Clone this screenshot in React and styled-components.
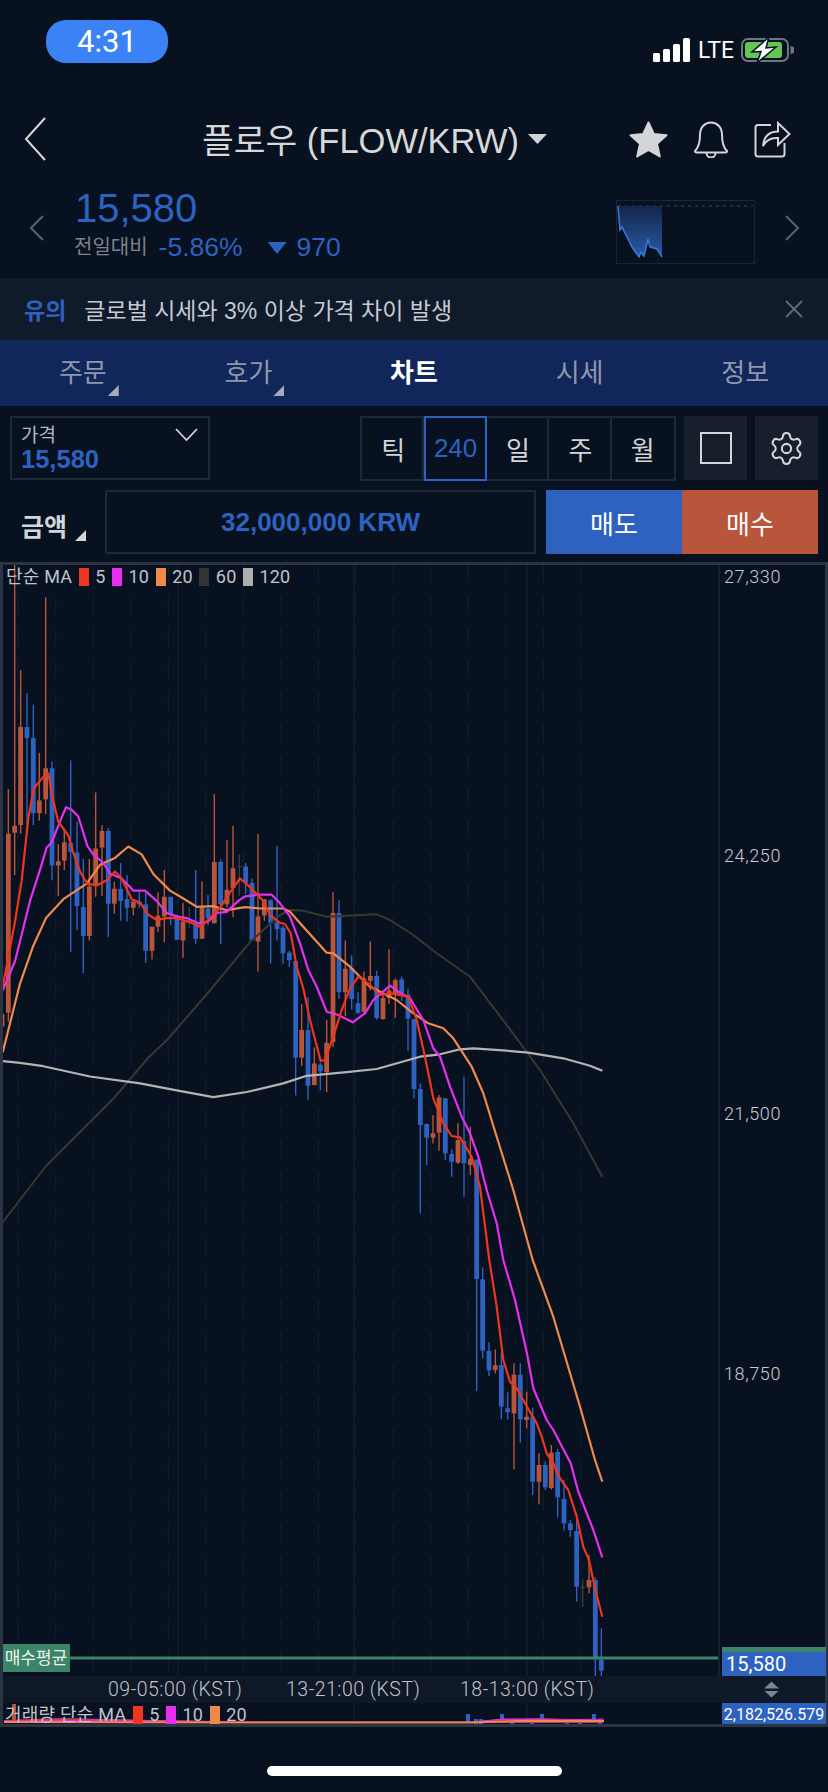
import React from "react";
import styled, { createGlobalStyle } from "styled-components";
import { Settings } from "lucide-react";

const BLUE = "#2d62c0";
const RED = "#b8553a";
const BG = "#07111f";

// candles as read off the chart: x, wick top, wick bottom, body top, body bottom, colour
const from3 = (c) => [c[0] / 3, 560 + c[1] / 2.904, 560 + c[2] / 2.904, 560 + c[3] / 2.904, 560 + c[4] / 2.904, c[5]];
const from4 = (c) => [280 + c[0] / 3, 860 + c[1] / 3, 860 + c[2] / 3, 860 + c[3] / 3, 860 + c[4] / 3, c[5]];
const from5 = (c) => [440 + c[0] / 3, 1260 + c[1] / 3, 1260 + c[2] / 3, 1260 + c[3] / 3, 1260 + c[4] / 3, c[5]];

const candles = [
  ...[
    [6, 1300, 1470, 1318, 1355, "r"], [25, 665, 1340, 795, 1315, "r"], [44, -10, 915, 772, 792, "r"],
    [62, 320, 795, 485, 770, "r"], [81, 387, 770, 485, 517, "b"], [100, 420, 770, 517, 735, "b"],
    [118, 560, 757, 698, 735, "r"], [137, 108, 738, 605, 695, "r"], [156, 585, 930, 605, 887, "b"],
    [175, 825, 975, 875, 887, "r"], [193, 780, 900, 820, 873, "r"], [212, 582, 1138, 822, 848, "b"],
    [231, 760, 1075, 850, 1005, "b"], [250, 868, 1200, 1008, 1092, "b"], [268, 868, 1105, 948, 1092, "r"],
    [287, 675, 978, 838, 945, "r"], [306, 770, 975, 787, 835, "r"], [325, 778, 1095, 787, 998, "b"],
    [343, 935, 1027, 955, 998, "r"], [362, 880, 1048, 955, 990, "b"], [381, 915, 1050, 985, 1010, "b"],
    [400, 985, 1032, 992, 1010, "r"], [418, 965, 1010, 992, 1000, "b"], [437, 965, 1170, 1000, 1135, "b"],
    [456, 1065, 1160, 1065, 1135, "r"], [474, 965, 1080, 1033, 1065, "r"], [493, 900, 1110, 978, 1035, "r"],
    [512, 978, 1060, 978, 1028, "b"], [531, 1030, 1103, 1035, 1103, "b"], [549, 995, 1155, 1050, 1105, "r"],
    [568, 1008, 1070, 1049, 1052, "g"], [587, 900, 1115, 1055, 1100, "b"], [606, 933, 1100, 1010, 1100, "r"],
    [624, 973, 1060, 1012, 1040, "b"], [643, 680, 1055, 877, 1055, "r"], [662, 870, 1115, 877, 1000, "b"],
    [681, 813, 1010, 958, 1000, "r"], [699, 772, 1037, 895, 952, "r"], [718, 855, 975, 889, 892, "g"],
    [737, 880, 970, 890, 938, "b"], [756, 925, 1105, 938, 1105, "b"], [774, 795, 1195, 1035, 1108, "r"],
    [793, 985, 1048, 985, 1032, "r"], [812, 985, 1172, 988, 1055, "b"], [831, 830, 1105, 1052, 1072, "b"],
    [849, 1062, 1172, 1068, 1142, "b"], [868, 1135, 1182, 1140, 1162, "b"], [887, 1165, 1555, 1165, 1445, "b"],
    [905, 1290, 1470, 1365, 1445, "r"], [924, 1270, 1568, 1365, 1527, "b"], [943, 1415, 1520, 1462, 1525, "r"],
    [961, 1460, 1540, 1465, 1485, "b"], [980, 1335, 1545, 1402, 1487, "r"], [999, 965, 1415, 1025, 1400, "r"],
    [1017, 988, 1275, 1025, 1255, "b"], [1036, 1105, 1325, 1187, 1255, "r"], [1055, 1148, 1305, 1185, 1275, "b"],
    [1074, 1255, 1318, 1287, 1315, "b"], [1092, 1195, 1315, 1215, 1312, "r"], [1111, 1108, 1250, 1208, 1222, "r"],
    [1130, 1193, 1335, 1208, 1330, "b"], [1149, 1250, 1335, 1272, 1333, "r"], [1167, 1130, 1290, 1250, 1272, "r"],
    [1186, 1215, 1330, 1220, 1260, "r"], [1205, 1210, 1280, 1218, 1262, "b"], [1224, 1245, 1425, 1262, 1332, "b"],
  ].map(from3),
  ...[
    [402, 477, 715, 477, 687, "b"], [421, 670, 1060, 687, 795, "b"], [440, 790, 915, 792, 833, "b"],
    [459, 765, 850, 820, 833, "r"], [477, 705, 872, 712, 818, "r"], [496, 715, 900, 715, 880, "b"],
    [515, 868, 950, 882, 905, "b"], [534, 790, 912, 840, 908, "r"], [552, 650, 1010, 843, 910, "b"],
    [571, 800, 945, 897, 915, "r"],
  ].map(from4),
  ...[
    [110, -301, 393, -301, 57, "b"], [128, 22, 295, 58, 272, "b"], [147, 247, 348, 273, 331, "b"],
    [166, 268, 340, 316, 330, "r"], [184, 277, 478, 315, 440, "b"], [203, 397, 478, 445, 456, "b"],
    [222, 310, 628, 344, 460, "r"], [241, 310, 548, 344, 478, "b"], [260, 395, 505, 470, 480, "r"],
    [278, 443, 705, 470, 665, "b"], [297, 580, 733, 615, 665, "r"], [316, 605, 690, 615, 682, "b"],
    [334, 555, 688, 578, 684, "r"], [353, 567, 772, 576, 712, "b"], [372, 660, 812, 717, 790, "b"],
    [391, 780, 830, 790, 810, "b"], [410, 760, 1025, 813, 980, "b"], [428, 958, 1040, 980, 984, "g"],
    [447, 885, 1000, 960, 982, "r"], [466, 952, 1250, 960, 1195, "b"], [484, 1105, 1250, 1200, 1232, "b"],
  ].map(from5),
];

const line3 = (pts) => pts.map(([x, y]) => [x / 3, 560 + y / 2.904]);
const line4 = (pts) => pts.map(([x, y]) => [280 + x / 3, 860 + y / 3]);
const line5 = (pts) => pts.map(([x, y]) => [440 + x / 3, 1260 + y / 3]);
const toPoints = (pts) => pts.map(([x, y]) => `${x.toFixed(1)},${y.toFixed(1)}`).join(" ");

const ma5 = [
  ...line3([[8, 1240], [45, 1050], [65, 930], [85, 750], [100, 670], [108, 655], [130, 630], [145, 620], [160, 700], [175, 760], [205, 800], [220, 850], [240, 905], [262, 940], [290, 945], [320, 930], [345, 905], [365, 925], [395, 985], [420, 995], [445, 1030], [470, 1045], [500, 1040], [530, 1040], [565, 1050], [600, 1065], [625, 1045], [660, 1010], [690, 965], [720, 925], [750, 950], [790, 990], [810, 1030], [835, 1050]]),
  ...line4([[0, 188], [15, 192], [32, 220], [50, 320], [70, 385], [90, 480], [122, 603], [135, 600], [160, 530], [185, 450], [210, 385], [235, 350], [270, 375], [300, 405], [335, 400], [385, 410], [410, 480], [435, 590], [460, 715], [490, 790], [515, 828], [540, 832], [575, 890], [600, 980]]),
  ...line5([[148, 0], [170, 140], [190, 300], [210, 365], [230, 385], [255, 430], [290, 490], [305, 530], [320, 580], [340, 610], [360, 655], [385, 690], [410, 770], [430, 860], [447, 900], [465, 985], [487, 1070]]),
];
const ma10 = [
  ...line3([[8, 1250], [45, 1165], [90, 990], [120, 900], [140, 835], [155, 820], [180, 760], [198, 718], [215, 725], [235, 745], [262, 830], [280, 855], [310, 880], [330, 910], [365, 925], [400, 960], [435, 960], [470, 990], [500, 1025], [530, 1035], [560, 1040], [595, 1055], [625, 1050], [650, 1025], [680, 1022], [715, 990], [735, 977], [780, 972], [815, 972]]),
  ...line4([[0, 130], [30, 170], [60, 250], [85, 330], [110, 380], [140, 455], [175, 465], [218, 487], [255, 460], [280, 420], [330, 377], [355, 395], [390, 415], [430, 480], [460, 565], [480, 590], [510, 680], [545, 770], [570, 820], [595, 890], [620, 990], [650, 1090]]),
  ...line5([[190, 0], [225, 120], [262, 285], [280, 385], [320, 480], [340, 510], [392, 610], [415, 695], [460, 810], [487, 892]]),
];
const ma20 = [
  ...line3([[8, 1430], [60, 1230], [100, 1120], [138, 1040], [190, 985], [260, 940], [300, 885], [345, 865], [385, 832], [425, 855], [460, 912], [510, 960], [545, 980], [590, 1007], [640, 1005], [680, 1017], [735, 1008], [780, 1012], [850, 1012]]),
  ...line4([[30, 155], [65, 195], [140, 278], [160, 280], [210, 320], [270, 380], [350, 420], [400, 460], [445, 490], [490, 505], [520, 535], [575, 620], [610, 700], [650, 830], [700, 990]]),
  ...line5([[278, 0], [340, 170], [420, 440], [465, 600], [487, 665]]),
];
const ma60 = [
  [3, 1222], [46, 1166], [114, 1098], [148, 1058], [167, 1040], [207, 994], [250, 942],
  ...line4([[0, 165], [30, 150], [70, 152], [140, 170], [290, 163], [330, 180], [400, 225], [470, 280], [570, 350], [680, 495], [780, 630], [880, 790], [967, 950]]),
];
const ma120 = [
  ...line3([[8, 1455], [60, 1460], [130, 1470], [270, 1500], [420, 1520], [530, 1540], [640, 1560], [740, 1545], [850, 1520], [920, 1498], [1040, 1487], [1130, 1478]]),
  ...line4([[420, 590], [480, 583], [540, 568], [580, 565], [680, 572], [745, 578], [850, 595], [930, 617], [967, 632]]),
];

const dashX = Array.from({ length: 16 }, (_, i) => 18.3 + i * 37.5);
const candleColor = { r: RED, b: BLUE, g: "#3a3d40" };

const GlobalStyle = createGlobalStyle`
  html, body {
    margin: 0;
    padding: 0;
    background: ${BG};
  }
  * {
    box-sizing: border-box;
  }
`;

const Page = styled.div`
  width: 828px;
  height: 1792px;
  display: flex;
  flex-direction: column;
  background: ${BG};
  color: #d3d5d8;
  font-family: "Liberation Sans", "Noto Sans CJK KR", sans-serif;
  overflow: hidden;
`;

const StatusBar = styled.div`
  height: 100px;
  display: flex;
  justify-content: space-between;
  padding: 20px 34px 0 46px;
`;

const TimePill = styled.div`
  width: 122px;
  height: 43px;
  border-radius: 20px;
  background: #3b82f6;
  color: #fff;
  font-family: Roboto, sans-serif;
  font-size: 31px;
  line-height: 43px;
  text-align: center;
`;

const StatusIcons = styled.div`
  display: flex;
  align-items: center;
  gap: 7px;
  height: 26px;
  margin-top: 17px;
`;

const Lte = styled.span`
  font-family: Roboto, sans-serif;
  font-size: 23px;
  color: #fff;
`;

const NavBar = styled.div`
  height: 78px;
  display: flex;
  align-items: center;
  padding: 0 37px 0 24px;
`;

const Title = styled.div`
  flex: 1;
  display: flex;
  align-items: center;
  justify-content: center;
  gap: 9px;
  font-size: 34.5px;
  color: #d8d8d8;
  padding-left: 74px;
  margin-top: -2px;
`;

const TitleCaret = styled.span`
  width: 19px;
  height: 10px;
  margin-top: 2px;
  background: #d0d2d4;
  clip-path: polygon(0 0, 100% 0, 50% 100%);
`;

const NavIcons = styled.div`
  display: flex;
  align-items: center;
  gap: 25px;
`;

const PriceRow = styled.div`
  height: 100px;
  display: flex;
  align-items: center;
  padding: 0 29px 0 30px;
`;

const PriceInfo = styled.div`
  flex: 1;
  padding-left: 31px;
  margin-top: -8px;
`;

const PriceValue = styled.div`
  font-size: 40px;
  line-height: 46px;
  color: ${BLUE};
`;

const ChangeRow = styled.div`
  display: flex;
  align-items: center;
  font-size: 26.5px;
  line-height: 32px;
  color: ${BLUE};
`;

const ChangeLabel = styled.span`
  color: #7d838d;
  font-size: 20px;
  margin-left: -1px;
  margin-right: 11px;
`;

const DownMark = styled.span`
  width: 19px;
  height: 12px;
  margin: 2px 10px 0 25px;
  background: ${BLUE};
  clip-path: polygon(0 0, 100% 0, 50% 100%);
`;

const MiniChart = styled.svg`
  width: 139px;
  height: 64px;
  margin-right: 30px;
  margin-top: 8px;
`;

const Notice = styled.div`
  height: 62px;
  display: flex;
  align-items: center;
  padding: 0 25px 0 24px;
  background: #0f1a2b;
  font-size: 23px;
  color: #c6cad0;
`;

const NoticeTag = styled.b`
  color: ${BLUE};
  margin-right: 18px;
`;

const NoticeText = styled.span`
  flex: 1;
`;

const Tabs = styled.div`
  height: 66px;
  display: flex;
  background: #11275c;
`;

const Tab = styled.div`
  flex: 1;
  text-align: center;
  font-size: 26px;
  line-height: 66px;
  font-weight: ${(p) => (p.$active ? 700 : 400)};
  color: ${(p) => (p.$active ? "#fff" : "#8f98ab")};
`;

const TabLabel = styled.span`
  position: relative;
  display: inline-block;
`;

const CornerMark = styled.span`
  position: absolute;
  right: ${(p) => p.$right || "-12px"};
  bottom: ${(p) => p.$bottom || "10px"};
  width: 11px;
  height: 11px;
  background: ${(p) => p.$color || "#a3aab8"};
  clip-path: polygon(100% 0, 100% 100%, 0 100%);
`;

const Controls = styled.div`
  display: flex;
  padding: 10px 10px 0;
`;

const PriceSelect = styled.div`
  position: relative;
  width: 200px;
  height: 64px;
  padding: 6px 9px;
  border: 2px solid #1e2838;
`;

const SelectLabel = styled.div`
  font-size: 19px;
  line-height: 23px;
  color: #b4b8be;
`;

const SelectValue = styled.div`
  font-size: 25.5px;
  line-height: 24px;
  font-weight: 700;
  color: ${BLUE};
`;

const SelectArrow = styled.svg`
  position: absolute;
  right: 10px;
  top: 10px;
`;

const Segments = styled.div`
  display: flex;
  width: 316px;
  margin-left: auto;
  height: 65px;
  border: 2px solid #1e2838;
`;

const Segment = styled.div`
  flex: 1;
  margin: -2px 0;
  display: flex;
  align-items: center;
  justify-content: center;
  font-size: 26px;
  color: ${(p) => (p.$active ? BLUE : "#d3d5d8")};
  border: 2px solid ${(p) => (p.$active ? BLUE : "transparent")};
  border-right-color: ${(p) => (p.$active ? BLUE : "#1e2838")};
  &:last-child {
    border-right-color: transparent;
  }
`;

const IconButton = styled.div`
  width: 63px;
  height: 64px;
  margin-left: 8px;
  display: flex;
  align-items: center;
  justify-content: center;
  background: #171f2d;
`;

const SquareMark = styled.span`
  width: 32px;
  height: 32px;
  border: 2px solid #d3d5d8;
`;

const OrderRow = styled.div`
  display: flex;
  height: 64px;
  margin-top: 9px;
  padding: 0 10px 0 21px;
`;

const AmountLabel = styled.div`
  width: 84px;
  display: flex;
  align-items: center;
  font-size: 25px;
  font-weight: 700;
  padding-top: 6px;
`;

const AmountBox = styled.div`
  width: 431px;
  margin-right: 10px;
  display: flex;
  align-items: center;
  justify-content: center;
  border: 2px solid #1e2838;
  font-size: 26px;
  font-weight: 700;
  color: ${BLUE};
`;

const TradeButton = styled.div`
  flex: 1;
  display: flex;
  align-items: center;
  justify-content: center;
  font-size: 26px;
  color: #fff;
  background: ${(p) => p.$bg};
`;

const ChartPanel = styled.div`
  margin-top: 8px;
  flex: 0 0 1165px;
  display: flex;
  flex-direction: column;
  border: 3px solid #2b3442;
  background: #081120;
  font-family: Roboto, "Noto Sans CJK KR", sans-serif;
`;

const ChartRow = styled.div`
  display: flex;
  flex: ${(p) => p.$flex || "none"};
  height: ${(p) => p.$height || "auto"};
  background: ${(p) => p.$bg || "transparent"};
`;

const Plot = styled.div`
  position: relative;
  width: 715px;
  height: 100%;
  overflow: hidden;
`;

const PlotSvg = styled.svg`
  display: block;
`;

const Legend = styled.div`
  position: absolute;
  left: ${(p) => p.$left || "3px"};
  top: ${(p) => p.$top || "1px"};
  display: flex;
  align-items: center;
  font-size: 18px;
  line-height: 22px;
  letter-spacing: 0.2px;
  color: #c0c4ca;
`;

const Swatch = styled.span`
  width: 10px;
  height: 18px;
  margin: 0 6.5px;
  background: ${(p) => p.$color};
`;

const AvgLabel = styled.div`
  position: absolute;
  left: -1px;
  bottom: 4px;
  width: 68px;
  height: 28px;
  background: #3b8468;
  color: #eef3f0;
  font-size: 17px;
  line-height: 28px;
  text-align: center;
  white-space: nowrap;
`;

const Axis = styled.div`
  position: relative;
  flex: 1;
  display: flex;
  flex-direction: column;
  justify-content: flex-end;
  border-left: ${(p) => (p.$line ? "2px solid #172131" : "none")};
`;

const AxisLabel = styled.div`
  position: absolute;
  left: 4px;
  top: ${(p) => p.$top}px;
  font-size: 18px;
  font-weight: 300;
  line-height: 22px;
  letter-spacing: 0.6px;
  color: #c8ccd2;
`;

const PriceTag = styled.div`
  margin-left: 2px;
  margin-right: -1px;
  height: 29px;
  border-top: 5px solid #3b8468;
  background: ${BLUE};
  color: #fff;
  font-size: 20px;
  line-height: 24px;
  padding-left: 4px;
`;

const TimeLabels = styled.div`
  width: 715px;
  display: flex;
  align-items: center;
  padding-left: 105px;
  font-size: 19.5px;
  font-weight: 300;
  letter-spacing: 0.5px;
  color: #c0c4ca;
`;

const TimeLabel = styled.span`
  width: ${(p) => p.$width}px;
  white-space: nowrap;
`;

const ArrowPair = styled.div`
  width: 100%;
  height: 100%;
  display: flex;
  flex-direction: column;
  align-items: center;
  justify-content: center;
  gap: 2px;
`;

const Arrow = styled.span`
  width: 15px;
  height: 7px;
  background: #7c8594;
  clip-path: ${(p) => (p.$up ? "polygon(50% 0, 100% 100%, 0 100%)" : "polygon(0 0, 100% 0, 50% 100%)")};
`;

const VolumeValue = styled.div`
  margin-left: 4px;
  margin-right: -1px;
  height: 100%;
  background: ${BLUE};
  color: #fff;
  font-size: 16px;
  line-height: 23px;
  text-align: center;
  white-space: nowrap;
`;

const HomeArea = styled.div`
  flex: 1;
  display: flex;
  justify-content: center;
  padding-top: 39px;
`;

const HomeBar = styled.div`
  width: 295px;
  height: 10px;
  border-radius: 5px;
  background: #fff;
`;

const SignalIcon = () => (
  <svg width="38" height="24" viewBox="0 0 38 24">
    <rect x="0" y="15" width="7" height="9" rx="1.5" fill="#fff" />
    <rect x="10" y="11" width="7" height="13" rx="1.5" fill="#fff" />
    <rect x="20" y="6" width="7" height="18" rx="1.5" fill="#fff" />
    <rect x="30" y="0" width="7" height="24" rx="1.5" fill="#fff" />
  </svg>
);

const BatteryIcon = () => (
  <svg width="53" height="26" viewBox="0 0 53 26">
    <rect x="1" y="2" width="46" height="22" rx="6" fill="none" stroke="#6f767d" strokeWidth="2" />
    <rect x="4" y="5" width="37" height="16" rx="3" fill="#62c554" />
    <path d="M49.5 9 a4 4 0 0 1 0 8 z" fill="#6f767d" />
    <path d="M28 0 L11 15 L20 14.5 L16 26 L35 10 L25 11 Z" fill="#fff" stroke={BG} strokeWidth="1.5" />
  </svg>
);

const BackIcon = ({ size }) => (
  <svg width={size} height={size * 2} viewBox="0 0 22 44" fill="none">
    <path d="M21 1 L2 22 L21 43" stroke="#d8d8d8" strokeWidth="2" />
  </svg>
);

const PagerIcon = ({ flip }) => (
  <svg width="14" height="26" viewBox="0 0 14 26" fill="none">
    <path d={flip ? "M1 1 L13 13 L1 25" : "M13 1 L1 13 L13 25"} stroke="#5a6270" strokeWidth="2" />
  </svg>
);

const StarIcon = () => (
  <svg width="39" height="37" viewBox="0 0 39 37">
    <path
      d="M19.5 1.5 L24.8 13 L37.5 14.3 L28 22.8 L30.8 35.5 L19.5 29 L8.2 35.5 L11 22.8 L1.5 14.3 L14.2 13 Z"
      fill="#d3d5d8"
      stroke="#d3d5d8"
      strokeWidth="2"
      strokeLinejoin="round"
    />
  </svg>
);

const BellIcon = () => (
  <svg width="36" height="37" viewBox="0 0 36 37" fill="none" stroke="#d3d5d8" strokeWidth="2">
    <path d="M2 30 C6 26 7 22 7 14 C7 6 12 1.5 18 1.5 C24 1.5 29 6 29 14 C29 22 30 26 34 30 C34 31.5 33 31.5 32 31.5 L4 31.5 C3 31.5 2 31.5 2 30 Z" />
    <path d="M13.5 32 C13.5 38 22.5 38 22.5 32" />
  </svg>
);

const ShareIcon = () => (
  <svg width="37" height="37" viewBox="0 0 37 37" fill="none" stroke="#d3d5d8" strokeWidth="2">
    <path d="M17 4 L4 4 Q1.5 4 1.5 6.5 L1.5 33 Q1.5 35.5 4 35.5 L28 35.5 Q30.5 35.5 30.5 33 L30.5 22" />
    <path d="M9 25 C10 15 16 10.5 24 10.5 L24 2 L35.5 13 L24 24 L24 17 C18 16.5 12 19 9 25 Z" />
  </svg>
);

const MiniSpark = () => {
  const pts = [[2, 6], [4, 30], [6, 27], [11, 37], [16, 47], [23, 57], [25, 52], [28, 56], [32, 39], [34, 47], [41, 49], [46, 57]];
  return (
    <MiniChart viewBox="0 0 139 64">
      <defs>
        <linearGradient id="miniFill" x1="0" y1="0" x2="0" y2="1">
          <stop offset="0" stopColor="#12264a" />
          <stop offset="1" stopColor="#2a5aa8" />
        </linearGradient>
      </defs>
      <rect x="0.5" y="0.5" width="138" height="63" fill="none" stroke="#1a2434" />
      <line x1="2" y1="6" x2="137" y2="6" stroke="#2a3342" strokeWidth="1.5" strokeDasharray="3 4" />
      <polygon points={`2,6 ${toPoints(pts)} 46,6`} fill="url(#miniFill)" />
      <polyline points={toPoints(pts)} fill="none" stroke="#3a78dc" strokeWidth="1.5" />
    </MiniChart>
  );
};

const PriceChart = () => (
  <PlotSvg width="715" height="1111" viewBox="3 565 715 1111">
    {dashX.map((x) => (
      <line key={x} x1={x} y1="564" x2={x} y2="1676" stroke="#111b2b" strokeWidth="1.5" strokeDasharray="19 13" />
    ))}
    {[178, 354, 527].map((x) => (
      <line key={x} x1={x} y1="564" x2={x} y2="1676" stroke="#141e2e" strokeWidth="1.5" />
    ))}
    {candles.map(([x, wickTop, wickBottom, bodyTop, bodyBottom, c]) => (
      <g key={x} fill={candleColor[c]}>
        <rect x={x - 0.7} y={wickTop} width="1.4" height={wickBottom - wickTop} />
        <rect x={x - 2.4} y={bodyTop} width="4.8" height={bodyBottom - bodyTop} />
      </g>
    ))}
    <g fill="none" strokeLinejoin="round" strokeWidth="2.2">
      <polyline points={toPoints(ma60)} stroke="#38382f" strokeWidth="2" />
      <polyline points={toPoints(ma120)} stroke="#b4b4b4" />
      <polyline points={toPoints(ma20)} stroke="#ef8a4c" />
      <polyline points={toPoints(ma10)} stroke="#e62ff0" />
      <polyline points={toPoints(ma5)} stroke="#ee3520" />
    </g>
    <rect x="3" y="1656.5" width="715" height="3" fill="#3b8468" />
  </PlotSvg>
);

const VolumeChart = () => (
  <PlotSvg width="715" height="21" viewBox="3 1703 715 21">
    {[178, 354, 527].map((x) => (
      <line key={x} x1={x} y1="1703" x2={x} y2="1724" stroke="#141e2e" strokeWidth="1.5" />
    ))}
    <rect x="12" y="1704" width="4" height="18" fill={RED} />
    {[466, 474, 479, 500, 510, 530, 540, 565, 578, 592, 598].map((x, i) => (
      <rect key={x} x={x} y={i % 3 === 0 ? 1714 : 1719} width="4" height="8" fill={BLUE} />
    ))}
    <path d="M4 1720 L60 1718 L150 1720 L260 1722 L470 1722 L500 1719 L540 1718 L600 1720 L604 1723 L4 1723 Z" fill="#c23a6a" />
    <polyline points="4,1721 120,1720 250,1722 470,1722 505,1719 560,1720 604,1719" fill="none" stroke="#e62ff0" strokeWidth="1.2" />
    <polyline points="4,1722 250,1722.5 470,1722.5 520,1721 604,1721" fill="none" stroke="#ef8a4c" strokeWidth="1.8" />
  </PlotSvg>
);

const App = () => (
  <Page>
    <GlobalStyle />
    <StatusBar>
      <TimePill>4:31</TimePill>
      <StatusIcons>
        <SignalIcon />
        <Lte>LTE</Lte>
        <BatteryIcon />
      </StatusIcons>
    </StatusBar>

    <NavBar>
      <BackIcon size={22} />
      <Title>
        플로우 (FLOW/KRW)
        <TitleCaret />
      </Title>
      <NavIcons>
        <StarIcon />
        <BellIcon />
        <ShareIcon />
      </NavIcons>
    </NavBar>

    <PriceRow>
      <PagerIcon />
      <PriceInfo>
        <PriceValue>15,580</PriceValue>
        <ChangeRow>
          <ChangeLabel>전일대비</ChangeLabel>
          -5.86%
          <DownMark />
          970
        </ChangeRow>
      </PriceInfo>
      <MiniSpark />
      <PagerIcon flip />
    </PriceRow>

    <Notice>
      <NoticeTag>유의</NoticeTag>
      <NoticeText>글로벌 시세와 3% 이상 가격 차이 발생</NoticeText>
      <svg width="18" height="18" viewBox="0 0 18 18" stroke="#5f6875" strokeWidth="2">
        <path d="M1 1 L17 17 M17 1 L1 17" />
      </svg>
    </Notice>

    <Tabs>
      <Tab>
        <TabLabel>
          주문
          <CornerMark />
        </TabLabel>
      </Tab>
      <Tab>
        <TabLabel>
          호가
          <CornerMark />
        </TabLabel>
      </Tab>
      <Tab $active>차트</Tab>
      <Tab>시세</Tab>
      <Tab>정보</Tab>
    </Tabs>

    <Controls>
      <PriceSelect>
        <SelectLabel>가격</SelectLabel>
        <SelectValue>15,580</SelectValue>
        <SelectArrow width="23" height="13" viewBox="0 0 23 13" fill="none">
          <path d="M1 1 L11.5 12 L22 1" stroke="#d3d5d8" strokeWidth="1.8" />
        </SelectArrow>
      </PriceSelect>
      <Segments>
        <Segment>틱</Segment>
        <Segment $active>240</Segment>
        <Segment>일</Segment>
        <Segment>주</Segment>
        <Segment>월</Segment>
      </Segments>
      <IconButton>
        <SquareMark />
      </IconButton>
      <IconButton>
        <Settings size={37} strokeWidth={1.3} color="#d3d5d8" />
      </IconButton>
    </Controls>

    <OrderRow>
      <AmountLabel>
        <TabLabel>
          금액
          <CornerMark $color="#d3d5d8" $right="-19px" $bottom="2px" />
        </TabLabel>
      </AmountLabel>
      <AmountBox>32,000,000 KRW</AmountBox>
      <TradeButton $bg={BLUE}>매도</TradeButton>
      <TradeButton $bg={RED}>매수</TradeButton>
    </OrderRow>

    <ChartPanel>
      <ChartRow $flex="1">
        <Plot>
          <PriceChart />
          <Legend>
            단순 MA
            <Swatch $color="#ee3520" />5
            <Swatch $color="#e62ff0" />10
            <Swatch $color="#ef8a4c" />20
            <Swatch $color="#333436" />60
            <Swatch $color="#aeaeae" />120
          </Legend>
          <AvgLabel>매수평균</AvgLabel>
        </Plot>
        <Axis $line>
          <AxisLabel $top={1}>27,330</AxisLabel>
          <AxisLabel $top={280}>24,250</AxisLabel>
          <AxisLabel $top={538}>21,500</AxisLabel>
          <AxisLabel $top={798}>18,750</AxisLabel>
          <PriceTag>15,580</PriceTag>
        </Axis>
      </ChartRow>
      <ChartRow $height="27px" $bg="#0f1826">
        <TimeLabels>
          <TimeLabel $width={178}>09-05:00 (KST)</TimeLabel>
          <TimeLabel $width={174}>13-21:00 (KST)</TimeLabel>
          <TimeLabel $width={140}>18-13:00 (KST)</TimeLabel>
        </TimeLabels>
        <Axis>
          <ArrowPair>
            <Arrow $up />
            <Arrow />
          </ArrowPair>
        </Axis>
      </ChartRow>
      <ChartRow $height="21px">
        <Plot>
          <VolumeChart />
          <Legend $left="2px" $top="1px">
            거래량 단순 MA
            <Swatch $color="#ee3520" />5
            <Swatch $color="#e62ff0" />10
            <Swatch $color="#ef8a4c" />20
          </Legend>
        </Plot>
        <Axis>
          <VolumeValue>2,182,526.579</VolumeValue>
        </Axis>
      </ChartRow>
    </ChartPanel>

    <HomeArea>
      <HomeBar />
    </HomeArea>
  </Page>
);

export default App;
